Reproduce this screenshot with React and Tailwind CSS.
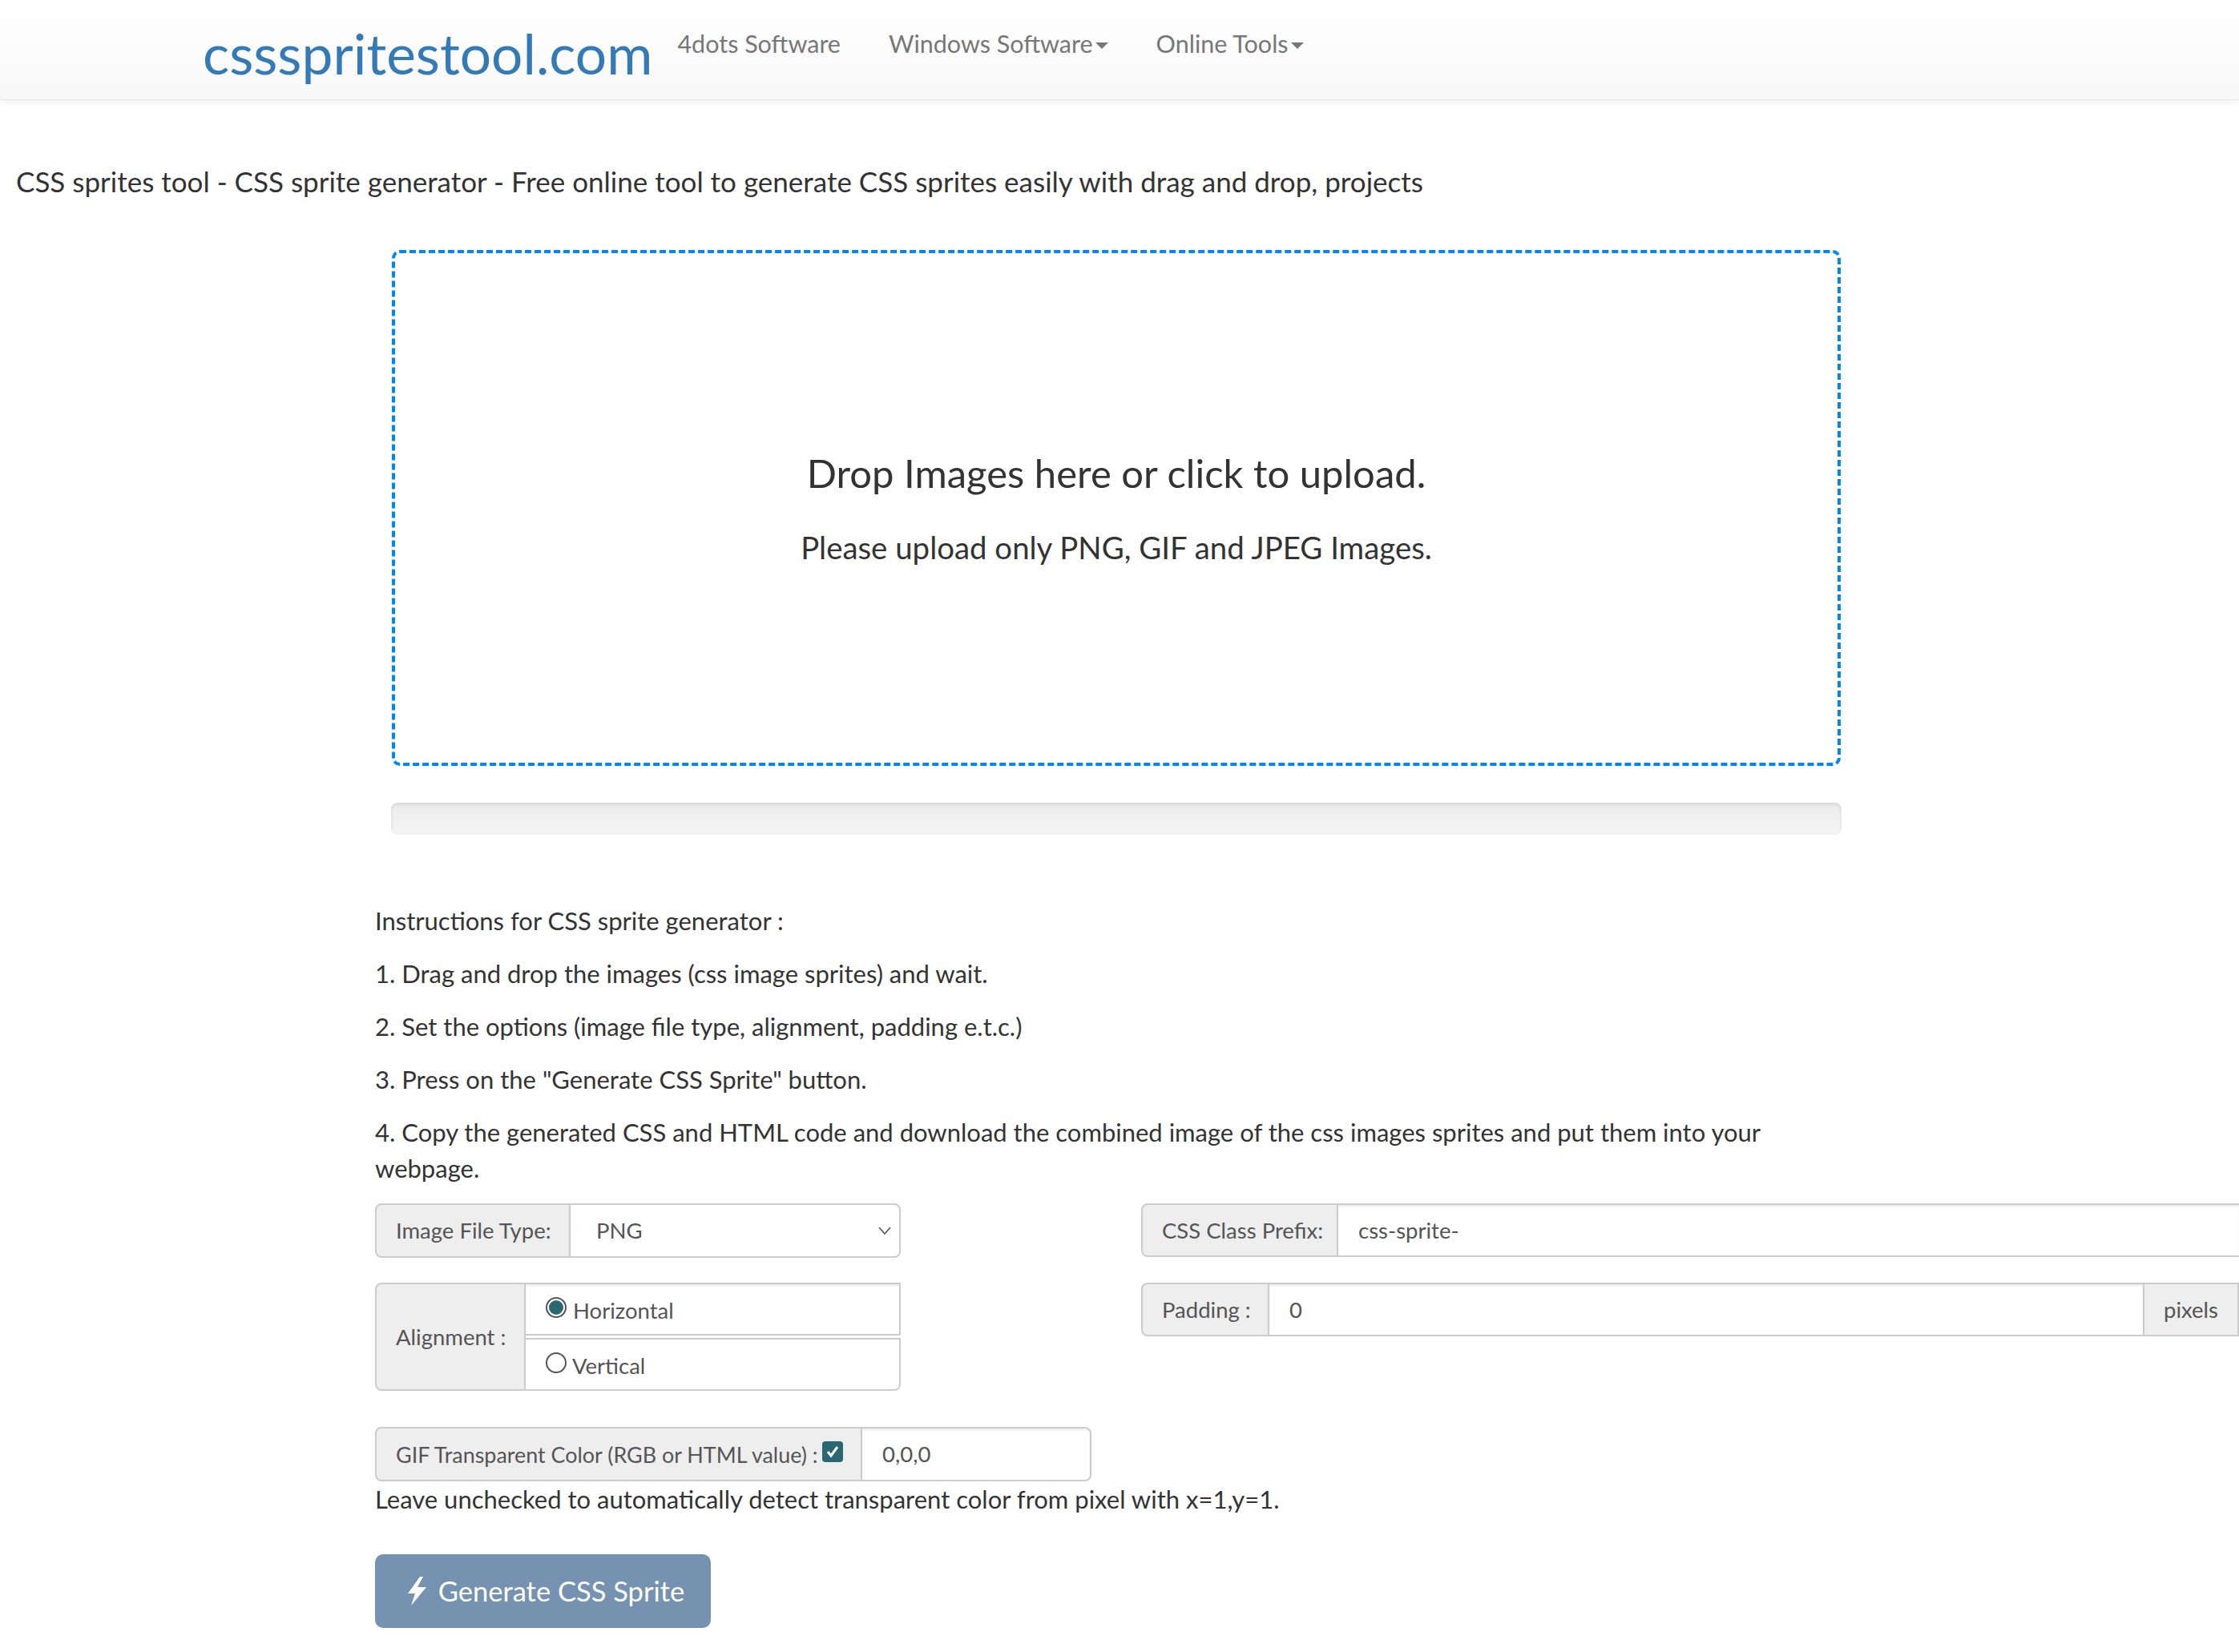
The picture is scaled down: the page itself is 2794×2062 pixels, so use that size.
const font = { fontFamily: '"Lato", "Noto Sans", sans-serif' }

function Addon({ className = '', children }) {
  return (
    <div className={`flex items-center bg-[#eeeeee] border-2 border-[#cccccc] px-[24px] text-[#555555] whitespace-nowrap ${className}`}>
      {children}
    </div>
  )
}

function Caret() {
  return <span className="inline-block ml-[3px] mt-[3px] border-x-[8px] border-t-[8px] border-x-transparent border-t-[#777777]" />
}

function Radio({ checked }) {
  return (
    <span className="flex items-center justify-center w-[26px] h-[26px] -mt-[4px] rounded-full border-2 border-[#555555] bg-white">
      {checked && <span className="w-[18px] h-[18px] rounded-full bg-[#2b6770]" />}
    </span>
  )
}

export default function App() {
  return (
    <div className="bg-white text-[#333333] min-h-[2062px] overflow-hidden text-[31px]" style={font}>
      <nav className="flex h-[125px] pl-[253px] bg-gradient-to-b from-white to-[#f8f8f8] border-b border-[#e7e7e7] shadow-[0_2px_10px_rgba(0,0,0,0.075)]">
        <a className="text-[#337ab7] text-[69.5px] leading-[132px]">cssspritestool.com</a>
        <ul className="flex ml-[31px] gap-[60px] text-[30.5px] text-[#777777] h-[110px] items-center">
          <li>4dots Software</li>
          <li className="flex items-center">Windows Software<Caret /></li>
          <li className="flex items-center">Online Tools<Caret /></li>
        </ul>
      </nav>

      <h1 className="ml-[20px] mt-[76px] text-[35px] leading-[50px]">
        CSS sprites tool - CSS sprite generator - Free online tool to generate CSS sprites easily with drag and drop, projects
      </h1>

      <div className="ml-[489px] mt-[61px] w-[1808px] h-[644px] flex flex-col items-center justify-center border-4 border-dashed border-[#0087f7] rounded-[10px]">
        <p className="text-[49px] leading-[70px] mt-[10px] mb-[33px]">Drop Images here or click to upload.</p>
        <p className="text-[38.4px] leading-[50px] mb-[15px]">Please upload only PNG, GIF and JPEG Images.</p>
      </div>

      <div className="ml-[488px] mt-[46px] w-[1810px] h-[40px] rounded-[8px] bg-gradient-to-b from-[#ebebeb] to-[#f5f5f5] shadow-[inset_0_2px_4px_rgba(0,0,0,0.1)]" />

      <div className="ml-[468px] mt-[85px] w-[1830px] leading-[45px]">
        <p className="mb-[21px]">Instructions for CSS sprite generator :</p>
        <p className="mb-[21px]">1. Drag and drop the images (css image sprites) and wait.</p>
        <p className="mb-[21px]">2. Set the options (image file type, alignment, padding e.t.c.)</p>
        <p className="mb-[21px]">3. Press on the "Generate CSS Sprite" button.</p>
        <p>4. Copy the generated CSS and HTML code and download the combined image of the css images sprites and put them into your webpage.</p>
      </div>

      <div className="ml-[468px] mt-[21px] flex gap-[300px] text-[27.5px]">
        <div className="w-[656px] shrink-0">
          <div className="flex h-[68px]">
            <Addon className="w-[244px] rounded-l-[8px]">Image File Type:</Addon>
            <div className="flex-1 flex items-center justify-between pl-[32px] pr-[10px] border-2 border-l-0 border-[#cccccc] rounded-r-[8px] text-[#555555]">
              <span>PNG</span>
              <svg width="16" height="10" viewBox="0 0 16 10" fill="none" stroke="#555555" strokeWidth="1.6"><path d="M1 1l7 8 7-8" /></svg>
            </div>
          </div>

          <div className="flex h-[135px] mt-[31px]">
            <Addon className="w-[188px] rounded-l-[8px]">Alignment :</Addon>
            <div className="flex-1 flex flex-col justify-between">
              <div className="flex items-center gap-[8px] pl-[25px] h-[66px] border-2 border-l-0 border-[#cccccc] shadow-[inset_0_2px_2px_rgba(0,0,0,0.075)] text-[#555555]">
                <Radio checked />
                <span className="mt-[4px]">Horizontal</span>
              </div>
              <div className="flex items-center gap-[7px] pl-[25px] h-[66px] border-2 border-l-0 border-[#cccccc] rounded-br-[8px] text-[#555555]">
                <Radio />
                <span className="mt-[4px]">Vertical</span>
              </div>
            </div>
          </div>
        </div>

        <div className="flex-1">
          <div className="flex h-[67px]">
            <Addon className="w-[246px] rounded-l-[8px]">CSS Class Prefix:</Addon>
            <input readOnly value="css-sprite-" className="flex-1 min-w-0 pl-[25px] border-y-2 border-[#cccccc] text-[#555555] shadow-[inset_0_2px_2px_rgba(0,0,0,0.075)] outline-none" />
          </div>
          <div className="flex h-[67px] mt-[32px]">
            <Addon className="w-[160px] rounded-l-[8px]">Padding :</Addon>
            <input readOnly value="0" className="flex-1 min-w-0 pl-[25px] border-y-2 border-[#cccccc] text-[#555555] shadow-[inset_0_2px_2px_rgba(0,0,0,0.075)] outline-none" />
            <Addon className="w-[120px]">pixels</Addon>
          </div>
        </div>
      </div>

      <div className="ml-[468px] mt-[45px] w-[894px] flex h-[68px] text-[27.5px]">
        <Addon className="w-[608px] rounded-l-[8px]">
          <span className="mt-[2px] text-[26.9px]">GIF Transparent Color (RGB or HTML value) :</span>
          <span className="ml-[5px] -mt-[6px] shrink-0 flex items-center justify-center w-[26px] h-[26px] rounded-[4px] bg-[#2b6770]">
            <svg width="18" height="18" viewBox="0 0 18 18" fill="none" stroke="#ffffff" strokeWidth="3"><path d="M3 9l4 5 8-11" /></svg>
          </span>
        </Addon>
        <input readOnly value="0,0,0" className="flex-1 min-w-0 pl-[25px] border-2 border-l-0 border-[#cccccc] rounded-r-[8px] text-[#555555] shadow-[inset_0_2px_2px_rgba(0,0,0,0.075)] outline-none" />
      </div>

      <p className="ml-[468px] leading-[45px]">Leave unchecked to automatically detect transparent color from pixel with x=1,y=1.</p>

      <button className="ml-[468px] mt-[46px] w-[419px] h-[92px] pl-[6px] flex items-center justify-center gap-[14px] bg-[#7593b1] rounded-[10px] text-white text-[34.5px]">
        <svg width="26" height="36" viewBox="0 0 26 36" fill="#ffffff"><path d="M17 0L2 21h9L6 36l19-23H14L21 0z" /></svg>
        Generate CSS Sprite
      </button>
    </div>
  )
}
